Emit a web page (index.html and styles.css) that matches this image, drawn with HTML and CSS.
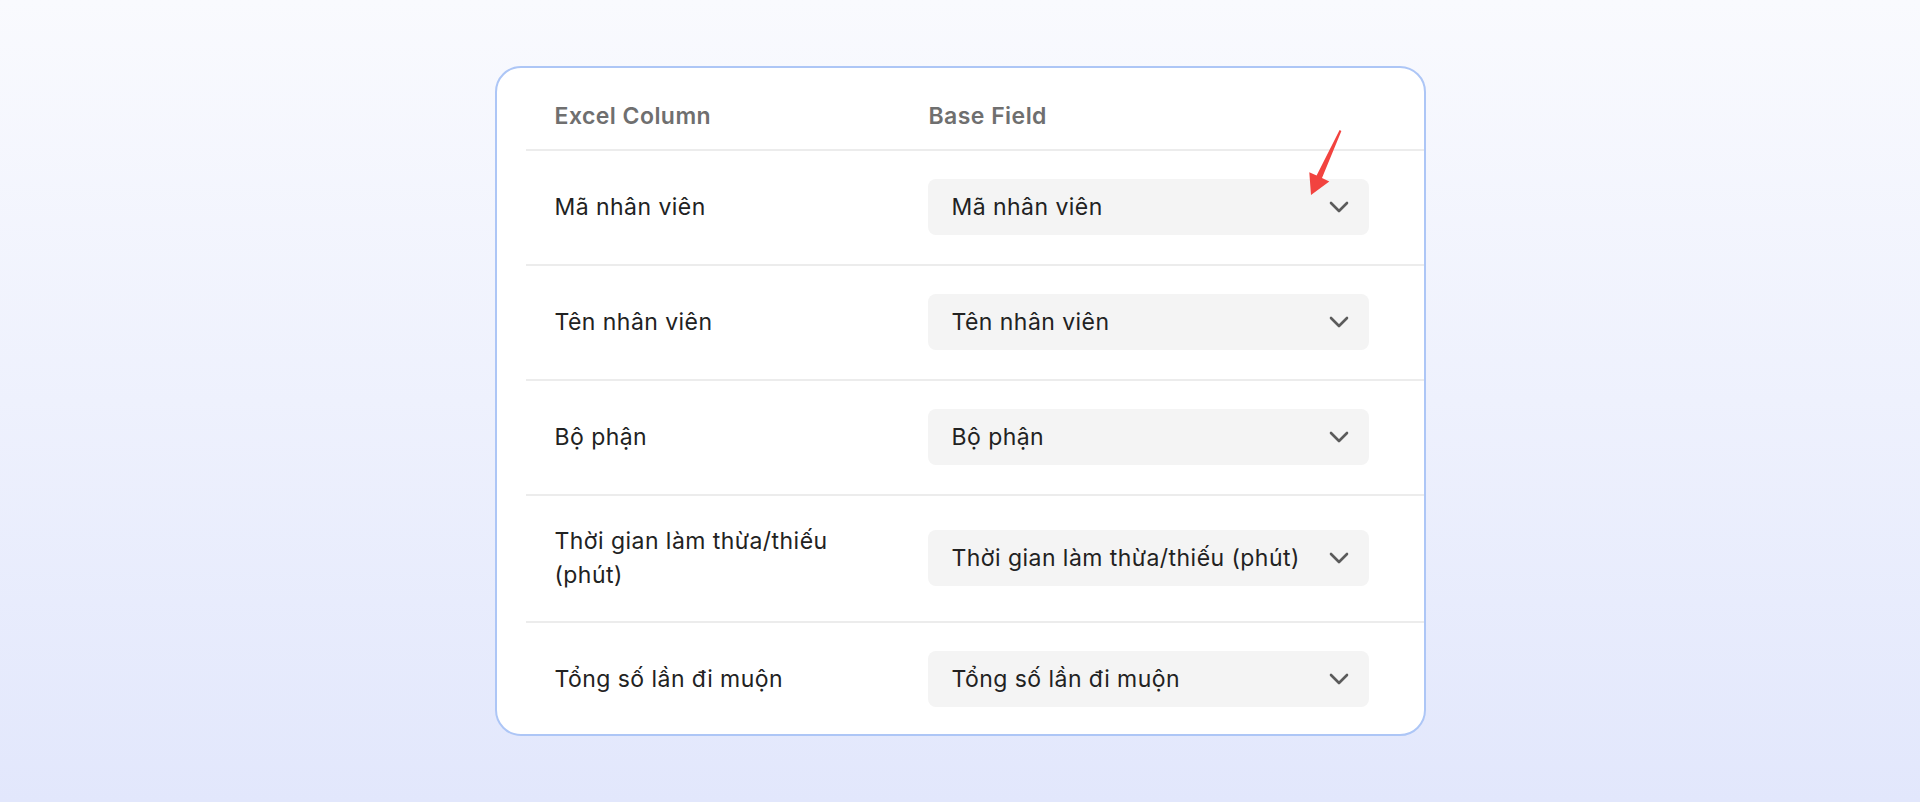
FILE: index.html
```html
<!DOCTYPE html>
<html lang="vi">
<head>
<meta charset="utf-8">
<title>Excel Column mapping</title>
<link rel="stylesheet" href="styles.css">
</head>
<body>
<div class="page">
  <div class="card">
    <div class="row head">
      <div class="c1">Excel Column</div>
      <div class="c2 head-c2">Base Field</div>
    </div>
    <div class="row">
      <div class="c1">Mã nhân viên</div>
      <div class="c2">
        <div class="select">
          <span class="value">Mã nhân viên</span>
          <svg class="chev" viewBox="0 0 20 12" width="20" height="12"><path d="M2 2 L10 10 L18 2" fill="none" stroke="#5b5b5b" stroke-width="2.6" stroke-linecap="round" stroke-linejoin="round"/></svg>
          <svg class="pointer" viewBox="0 0 50 80" width="50" height="80"><polygon points="39.6,6.1 41.4,6.9 22,54 29.3,57.4 11,71 9.3,48.2 16.6,51.6" fill="#f2433f"/></svg>
        </div>
      </div>
    </div>
    <div class="row">
      <div class="c1">Tên nhân viên</div>
      <div class="c2">
        <div class="select">
          <span class="value">Tên nhân viên</span>
          <svg class="chev" viewBox="0 0 20 12" width="20" height="12"><path d="M2 2 L10 10 L18 2" fill="none" stroke="#5b5b5b" stroke-width="2.6" stroke-linecap="round" stroke-linejoin="round"/></svg>
        </div>
      </div>
    </div>
    <div class="row">
      <div class="c1">Bộ phận</div>
      <div class="c2">
        <div class="select">
          <span class="value">Bộ phận</span>
          <svg class="chev" viewBox="0 0 20 12" width="20" height="12"><path d="M2 2 L10 10 L18 2" fill="none" stroke="#5b5b5b" stroke-width="2.6" stroke-linecap="round" stroke-linejoin="round"/></svg>
        </div>
      </div>
    </div>
    <div class="row">
      <div class="c1">Thời gian làm thừa/thiếu (phút)</div>
      <div class="c2">
        <div class="select">
          <span class="value">Thời gian làm thừa/thiếu (phút)</span>
          <svg class="chev" viewBox="0 0 20 12" width="20" height="12"><path d="M2 2 L10 10 L18 2" fill="none" stroke="#5b5b5b" stroke-width="2.6" stroke-linecap="round" stroke-linejoin="round"/></svg>
        </div>
      </div>
    </div>
    <div class="row last">
      <div class="c1">Tổng số lần đi muộn</div>
      <div class="c2">
        <div class="select">
          <span class="value">Tổng số lần đi muộn</span>
          <svg class="chev" viewBox="0 0 20 12" width="20" height="12"><path d="M2 2 L10 10 L18 2" fill="none" stroke="#5b5b5b" stroke-width="2.6" stroke-linecap="round" stroke-linejoin="round"/></svg>
        </div>
      </div>
    </div>
  </div>
</div>
</body>
</html>
```
FILE: styles.css
```css
html, body {
  margin: 0;
  padding: 0;
}
body {
  font-family: Inter, "Noto Sans", "Liberation Sans", sans-serif;
  color: #222;
}
.page {
  height: 802px;
  display: flex;
  align-items: center;
  justify-content: center;
  background: linear-gradient(180deg, #f9fafe 0%, #eef1fd 50%, #e2e7fc 100%);
}
.card {
  box-sizing: border-box;
  width: 931px;
  background: #fff;
  border: 2px solid #adc6f6;
  border-radius: 26px;
  padding-left: 29px;
}
.row {
  display: grid;
  grid-template-columns: 402px 441px;
  align-items: center;
  border-top: 2px solid #ececec;
  padding: 28px 0 29px;
  font-size: 23px;
  letter-spacing: 0.45px;
  line-height: 34px;
}
.row.head {
  border-top: none;
  padding: 31px 0 16px;
  font-weight: 600;
  color: #6f6f6f;
}
.row.last {
  padding-bottom: 27px;
}
.c1 {
  padding-left: 29px;
  padding-right: 50px;
}
.head-c2 {
  padding-left: 1px;
}
.select {
  position: relative;
  box-sizing: border-box;
  height: 56px;
  background: #f4f4f4;
  border-radius: 8px;
  display: flex;
  align-items: center;
  justify-content: space-between;
  padding: 0 20px 0 24px;
  color: #222;
}
.chev {
  display: block;
  flex: none;
}
.pointer {
  position: absolute;
  left: 372px;
  top: -55px;
}
```
